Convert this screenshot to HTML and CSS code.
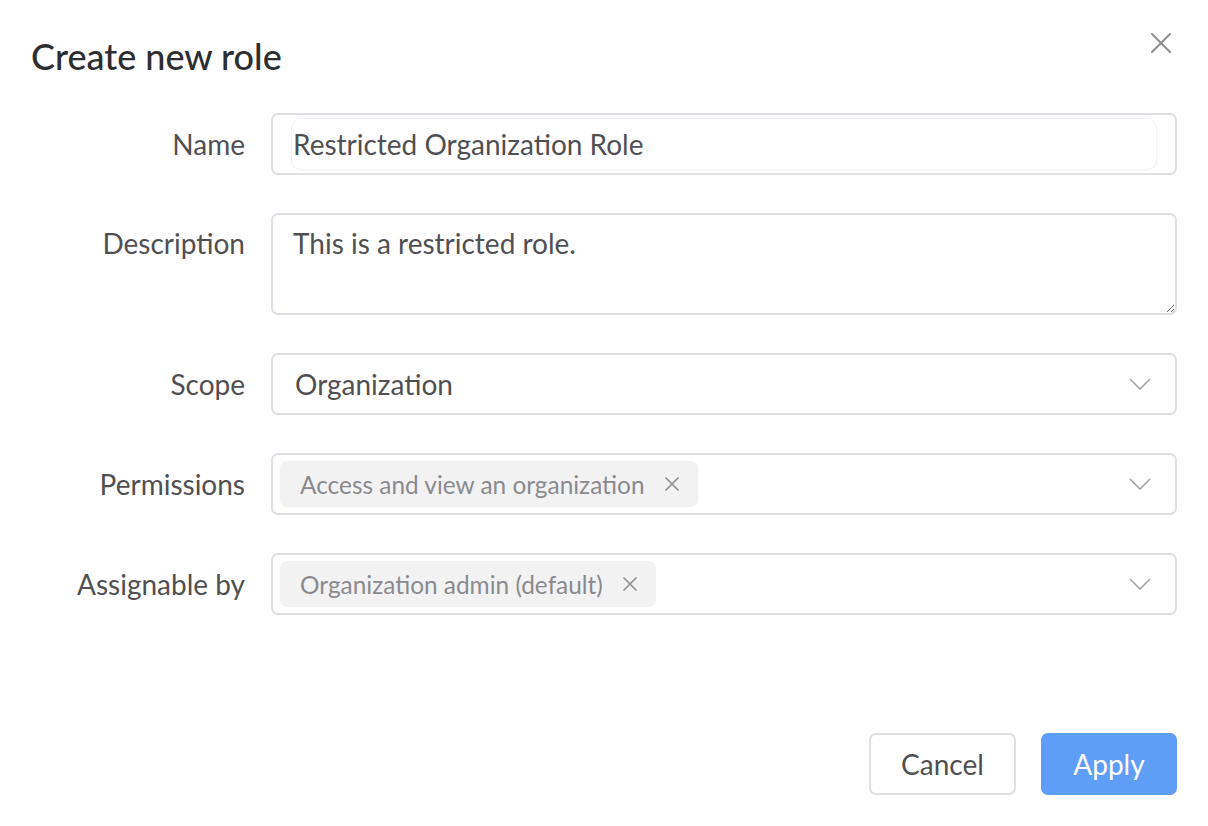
FILE: index.html
```html
<!DOCTYPE html>
<html>

<head>
    <title>Create new role</title>
    <link rel="stylesheet" href="styles.css">
</head>

<body>
    <div id="dialog">
        <div class="dialog-header">
            <h1>Create new role</h1>
            <button class="close-button" aria-label="Close">
                <svg width="20" height="20" viewBox="0 0 20 20">
                    <path d="M1 1 L19 19 M19 1 L1 19" stroke="#8e8e93" stroke-width="2" fill="none" stroke-linecap="round"/>
                </svg>
            </button>
        </div>

        <form class="role-form">
            <label class="label" for="name">Name</label>
            <div class="field field-name">
                <input id="name" class="name-input" type="text" value="Restricted Organization Role">
            </div>

            <label class="label label-top" for="description">Description</label>
            <textarea id="description" class="field field-area">This is a restricted role.</textarea>

            <label class="label">Scope</label>
            <div class="field select">
                <span class="select-value">Organization</span>
                <svg class="chevron" width="22" height="12" viewBox="0 0 22 12">
                    <path d="M1 1 L11 11 L21 1" stroke="#a3a3a8" stroke-width="1.6" fill="none"/>
                </svg>
            </div>

            <label class="label">Permissions</label>
            <div class="field select">
                <span class="tag">Access and view an organization
                    <svg class="tag-x" width="16" height="16" viewBox="0 0 16 16">
                        <path d="M1.5 1.5 L14.5 14.5 M14.5 1.5 L1.5 14.5" stroke="#8e8e93" stroke-width="1.6" fill="none"/>
                    </svg>
                </span>
                <svg class="chevron" width="22" height="12" viewBox="0 0 22 12">
                    <path d="M1 1 L11 11 L21 1" stroke="#a3a3a8" stroke-width="1.6" fill="none"/>
                </svg>
            </div>

            <label class="label">Assignable by</label>
            <div class="field select">
                <span class="tag">Organization admin (default)
                    <svg class="tag-x" width="16" height="16" viewBox="0 0 16 16">
                        <path d="M1.5 1.5 L14.5 14.5 M14.5 1.5 L1.5 14.5" stroke="#8e8e93" stroke-width="1.6" fill="none"/>
                    </svg>
                </span>
                <svg class="chevron" width="22" height="12" viewBox="0 0 22 12">
                    <path d="M1 1 L11 11 L21 1" stroke="#a3a3a8" stroke-width="1.6" fill="none"/>
                </svg>
            </div>
        </form>

        <div class="dialog-footer">
            <button class="btn btn-cancel">Cancel</button>
            <button class="btn btn-apply">Apply</button>
        </div>
    </div>
</body>
</html>
```

FILE: styles.css
```css
/* Create role dialog */
body {
    margin: 0;
    background-color: #ffffff;
    font-family: 'Lato', 'Noto Sans', sans-serif;
    color: #4f4f52;
}

#dialog {
    width: 1208px;
    height: 826px;
    box-sizing: border-box;
    padding: 0 31px 0 31px;
    display: flex;
    flex-direction: column;
}

.dialog-header {
    display: flex;
    justify-content: space-between;
    align-items: flex-start;
    height: 113px;
}

h1 {
    margin: 33px 0 0 0;
    font-size: 36px;
    line-height: 46px;
    font-weight: 500;
    color: #2e2e30;
}

.close-button {
    margin: 33px 6px 0 0;
    padding: 0;
    border: none;
    background: none;
    cursor: pointer;
    width: 20px;
    height: 20px;
}

.role-form {
    display: grid;
    grid-template-columns: 214px 906px;
    column-gap: 26px;
    row-gap: 38px;
    grid-template-rows: 62px 102px 62px 62px 62px;
}

.label {
    font-size: 28px;
    text-align: right;
    align-self: center;
    color: #505053;
}

.label-top {
    align-self: start;
    margin-top: 13px;
}

.field {
    box-sizing: border-box;
    border: 2px solid #dfe0e5;
    border-radius: 7px;
    background-color: #ffffff;
}

.field-name {
    padding: 3px 18px;
}

.name-input {
    box-sizing: border-box;
    width: 100%;
    height: 100%;
    border: 1px solid #f3f3f5;
    border-radius: 10px;
    box-shadow: 0 1px 2px rgba(0, 0, 0, 0.04);
    padding: 0 0 0 1px;
    font-family: inherit;
    font-size: 28px;
    color: #505053;
    outline: none;
}

.field-area {
    width: 906px;
    height: 102px;
    padding: 11px 20px;
    font-family: inherit;
    font-size: 28px;
    color: #505053;
    resize: vertical;
    outline: none;
}

.select {
    display: flex;
    align-items: center;
    justify-content: space-between;
    padding: 0 24px 0 7px;
}

.select-value {
    font-size: 28px;
    color: #505053;
    padding-left: 15px;
}

.tag {
    display: inline-flex;
    align-items: center;
    gap: 19px;
    height: 46px;
    padding: 0 18px 0 20px;
    background-color: #f2f2f3;
    border-radius: 7px;
    font-size: 24.4px;
    color: #8a8a8e;
}

.tag-x {
    width: 16px;
    height: 16px;
}

.dialog-footer {
    margin-top: auto;
    margin-bottom: 31px;
    display: flex;
    justify-content: flex-end;
    gap: 25px;
}

.btn {
    height: 62px;
    border-radius: 7px;
    font-family: inherit;
    font-size: 28px;
    cursor: pointer;
}

.btn-cancel {
    width: 147px;
    background-color: #ffffff;
    border: 2px solid #dfe0e5;
    color: #505053;
}

.btn-apply {
    width: 136px;
    background-color: #5f9ef7;
    border: none;
    color: #ffffff;
}
```
